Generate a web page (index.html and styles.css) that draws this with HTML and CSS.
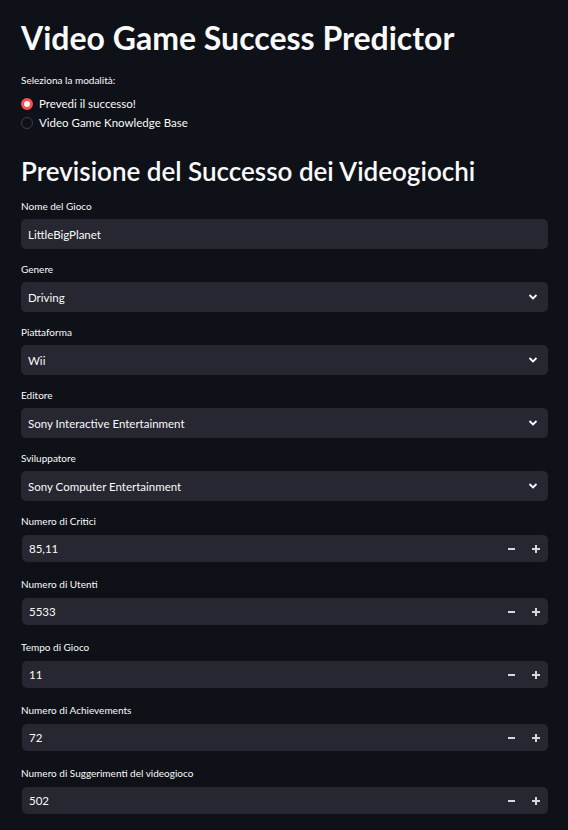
FILE: index.html
```html
<!DOCTYPE html>
<html lang="it">
<head>
<meta charset="utf-8">
<title>Video Game Success Predictor</title>
<link rel="stylesheet" href="styles.css">
</head>
<body>
<main class="app">
  <h1 class="title">Video Game Success Predictor</h1>

  <div class="radio-group">
    <div class="label">Seleziona la modalità:</div>
    <div class="radio-option">
      <span class="radio radio-on"></span>
      <span class="radio-text">Prevedi il successo!</span>
    </div>
    <div class="radio-option">
      <span class="radio radio-off"></span>
      <span class="radio-text">Video Game Knowledge Base</span>
    </div>
  </div>

  <h2 class="subtitle">Previsione del Successo dei Videogiochi</h2>

  <div class="field">
    <div class="label">Nome del Gioco</div>
    <div class="box text-box"><span class="value">LittleBigPlanet</span></div>
  </div>

  <div class="field">
    <div class="label">Genere</div>
    <div class="box select-box"><span class="value">Driving</span><svg class="chev" width="10" height="6" viewBox="0 0 10 6"><path d="M1.5 1 L5 4.5 L8.5 1" fill="none" stroke="#fafafa" stroke-width="1.8"/></svg></div>
  </div>

  <div class="field">
    <div class="label">Piattaforma</div>
    <div class="box select-box"><span class="value">Wii</span><svg class="chev" width="10" height="6" viewBox="0 0 10 6"><path d="M1.5 1 L5 4.5 L8.5 1" fill="none" stroke="#fafafa" stroke-width="1.8"/></svg></div>
  </div>

  <div class="field">
    <div class="label">Editore</div>
    <div class="box select-box"><span class="value">Sony Interactive Entertainment</span><svg class="chev" width="10" height="6" viewBox="0 0 10 6"><path d="M1.5 1 L5 4.5 L8.5 1" fill="none" stroke="#fafafa" stroke-width="1.8"/></svg></div>
  </div>

  <div class="field">
    <div class="label">Sviluppatore</div>
    <div class="box select-box"><span class="value">Sony Computer Entertainment</span><svg class="chev" width="10" height="6" viewBox="0 0 10 6"><path d="M1.5 1 L5 4.5 L8.5 1" fill="none" stroke="#fafafa" stroke-width="1.8"/></svg></div>
  </div>

  <div class="field num-field">
    <div class="label">Numero di Critici</div>
    <div class="box num-box"><span class="value">85,11</span><span class="step minus"></span><span class="step plus"></span></div>
  </div>

  <div class="field num-field">
    <div class="label">Numero di Utenti</div>
    <div class="box num-box"><span class="value">5533</span><span class="step minus"></span><span class="step plus"></span></div>
  </div>

  <div class="field num-field">
    <div class="label">Tempo di Gioco</div>
    <div class="box num-box"><span class="value">11</span><span class="step minus"></span><span class="step plus"></span></div>
  </div>

  <div class="field num-field">
    <div class="label">Numero di Achievements</div>
    <div class="box num-box"><span class="value">72</span><span class="step minus"></span><span class="step plus"></span></div>
  </div>

  <div class="field num-field">
    <div class="label">Numero di Suggerimenti del videogioco</div>
    <div class="box num-box"><span class="value">502</span><span class="step minus"></span><span class="step plus"></span></div>
  </div>
</main>
</body>
</html>
```

FILE: styles.css
```css
html, body {
  margin: 0;
  padding: 0;
  background: #0e1117;
  color: #fafafa;
  font-family: Lato, "Noto Sans", sans-serif;
}

.app {
  width: 527px;
  padding: 18px 20px 0 21px;
}

.title {
  margin: 0;
  font-size: 32px;
  line-height: 40px;
  font-weight: 700;
}

.radio-group {
  margin-top: 15px;
}

.label {
  font-size: 10px;
  line-height: 14px;
}

.radio-group .label {
  margin-bottom: 7px;
}

.radio-option {
  display: flex;
  align-items: center;
  gap: 6px;
  height: 19px;
  font-size: 11.5px;
}

.radio {
  box-sizing: border-box;
  width: 12px;
  height: 12px;
  border-radius: 50%;
  flex: none;
}

.radio-on {
  border: 3.5px solid #ff4b4b;
  background: #fafafa;
}

.radio-off {
  border: 1px solid #3d3f4b;
  background: #0e1117;
}

.subtitle {
  margin: 21px 0 0;
  font-size: 26px;
  line-height: 36px;
  font-weight: 600;
}

.subtitle + .field {
  margin-top: 10px;
}

.field .label {
  margin-bottom: 6px;
}

.box {
  box-sizing: border-box;
  display: flex;
  align-items: center;
  background: #262730;
  border-radius: 5px;
  padding: 0 7px;
  font-size: 11.5px;
}

.text-box, .select-box {
  height: 30px;
  margin-bottom: 13px;
}

.value {
  flex: 1;
}

.chev {
  margin-right: 3px;
}

.num-field .label {
  margin-bottom: 7px;
}

.num-box {
  height: 27px;
  margin-bottom: 15px;
  margin-left: 1px;
  padding-right: 0;
}

.step {
  position: relative;
  width: 24px;
  height: 27px;
  flex: none;
}

.step::before, .step::after {
  content: "";
  position: absolute;
  background: #d8d8dc;
}

.minus::before {
  width: 7px;
  height: 2px;
  left: 8px;
  top: 13px;
}

.minus::after {
  display: none;
}

.plus::before {
  width: 8px;
  height: 2px;
  left: 8px;
  top: 13px;
}

.plus::after {
  width: 2px;
  height: 8px;
  left: 11px;
  top: 10px;
}
```
